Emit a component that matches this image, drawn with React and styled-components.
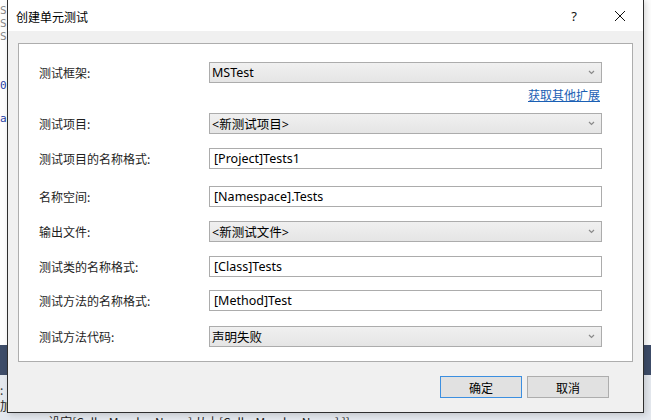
import React from "react";
import styled, { createGlobalStyle } from "styled-components";

const Global = createGlobalStyle`
  html, body { margin: 0; padding: 0; }
  body {
    width: 651px; height: 420px; overflow: hidden;
    font-family: "Noto Sans CJK SC", "Noto Sans", sans-serif;
    background: #f3f3f3;
  }
`;

const Desktop = styled.div`
  position: relative;
  width: 651px;
  height: 420px;
  overflow: hidden;
  display: flex;
  flex-direction: column;
`;

const EditorArea = styled.div`
  height: 345px;
  flex-shrink: 0;
  background: #fdfdfd;
  display: flex;
  flex-direction: column;
  padding-top: 4px;
  box-sizing: border-box;
  font-family: "DejaVu Sans Mono", monospace;
  font-size: 11px;
  line-height: 13px;
`;

const CodeLine = styled.div`
  color: ${(p) => p.$color || "#888"};
  margin-top: ${(p) => p.$mt || 0}px;
  white-space: pre;
`;

const Band = styled.div`
  height: 30px;
  flex-shrink: 0;
  background: #3d4c68;
`;

const LowerArea = styled.div`
  flex: 1;
  background: #e4e8ee;
  display: flex;
  flex-direction: column;
  font-family: "Noto Sans CJK SC", sans-serif;
  font-size: 12px;
  line-height: 14px;
  color: #222;
  padding-top: 8px;
`;

const Dialog = styled.div`
  position: absolute;
  left: 7px;
  top: -1px;
  width: 637px;
  height: 414px;
  box-sizing: border-box;
  border: 1px solid #2e2e2e;
  background: #f0f0f0;
  display: flex;
  flex-direction: column;
  box-shadow: 2px 2px 6px rgba(0,0,0,0.15);
`;

const TitleBar = styled.div`
  height: 31px;
  background: #ffffff;
  display: flex;
  align-items: center;
  padding: 0 0 0 8px;
  flex-shrink: 0;
`;

const Title = styled.div`
  flex: 1;
  font-size: 12px;
  color: #000;
  padding-top: 1px;
`;

const TitleButton = styled.div`
  width: ${(p) => p.$w}px;
  height: 31px;
  display: flex;
  align-items: center;
  justify-content: center;
  font-family: "Noto Sans", sans-serif;
  font-size: 13px;
  color: #111;
`;

const Body = styled.div`
  flex: 1;
  display: flex;
  flex-direction: column;
  padding: 12px 10px 0 10px;
`;

const Panel = styled.div`
  background: #fff;
  border: 1px solid #adadad;
  padding: 18px 30px 14px 20px;
  display: flex;
  flex-direction: column;
`;

const Row = styled.div`
  display: grid;
  grid-template-columns: 170px 393px;
  align-items: center;
  height: 21px;
  margin-top: ${(p) => p.$mt || 0}px;
`;

const Label = styled.div`
  font-size: 12px;
  color: #1e1e1e;
  line-height: 14px;
`;

const Combo = styled.div`
  height: 21px;
  box-sizing: border-box;
  border: 1px solid #acacac;
  background: linear-gradient(#f0f0f0, #e5e5e5);
  display: flex;
  align-items: center;
  padding: 0 6px 0 2px;
  font-family: "Noto Sans", "Noto Sans CJK SC", sans-serif;
  font-size: 12.5px;
  color: #000;
`;

const ComboText = styled.span`
  flex: 1;
`;

const TextBox = styled.div`
  height: 21px;
  box-sizing: border-box;
  border: 1px solid #acacac;
  background: #fff;
  display: flex;
  align-items: center;
  padding: 0 4px;
  font-family: "Noto Sans", "Noto Sans CJK SC", sans-serif;
  font-size: 12.5px;
  color: #000;
`;

const LinkRow = styled.div`
  height: 30px;
  display: flex;
  justify-content: flex-end;
  align-items: flex-start;
  padding-top: 5px;
  box-sizing: border-box;
  width: 561px;
`;

const Link = styled.a`
  font-size: 12px;
  line-height: 14px;
  color: #1a5fb4;
  text-decoration: underline;
  cursor: pointer;
`;

const ButtonBar = styled.div`
  display: flex;
  justify-content: flex-end;
  gap: 5px;
  padding: 14px 24px 0 0;
`;

const Button = styled.button`
  width: 82px;
  height: 22px;
  box-sizing: border-box;
  border: 1px solid ${(p) => (p.$default ? "#3c8fe0" : "#adadad")};
  background: #e1e1e1;
  font-family: "Noto Sans CJK SC", sans-serif;
  font-size: 12px;
  color: #000;
  padding: 0;
  display: flex;
  align-items: center;
  justify-content: center;
`;

const Chevron = () => (
  <svg width="7" height="5" viewBox="0 0 7 5">
    <polyline points="1,1 3.5,3.5 6,1" fill="none" stroke="#8a8a8a" strokeWidth="1.2" />
  </svg>
);

const CloseIcon = () => (
  <svg width="12" height="12" viewBox="0 0 12 12">
    <path d="M1 1 L11 11 M11 1 L1 11" stroke="#111" strokeWidth="1" />
  </svg>
);

const ComboField = ({ children }) => (
  <Combo>
    <ComboText>{children}</ComboText>
    <Chevron />
  </Combo>
);

const rows = [
  { label: "测试项目:", kind: "combo", value: "<新测试项目>", mt: 0 },
  { label: "测试项目的名称格式:", kind: "text", value: "[Project]Tests1", mt: 14 },
  { label: "名称空间:", kind: "text", value: "[Namespace].Tests", mt: 17 },
  { label: "输出文件:", kind: "combo", value: "<新测试文件>", mt: 14 },
  { label: "测试类的名称格式:", kind: "text", value: "[Class]Tests", mt: 14 },
  { label: "测试方法的名称格式:", kind: "text", value: "[Method]Test", mt: 13 },
  { label: "测试方法代码:", kind: "combo", value: "声明失败", mt: 15 },
];

export default function App() {
  return (
    <>
      <Global />
      <Desktop>
        <EditorArea>
          <CodeLine>S</CodeLine>
          <CodeLine>S</CodeLine>
          <CodeLine>S</CodeLine>
          <CodeLine $mt={36} $color="#1f3fa6">03</CodeLine>
          <CodeLine $mt={20} $color="#1f3fa6">ab</CodeLine>
        </EditorArea>
        <Band />
        <LowerArea>
          <CodeLine $color="#333">:</CodeLine>
          <CodeLine $mt={2} $color="#222">加</CodeLine>
          <CodeLine $mt={2} $color="#222">{"       · .  . 设定[CallerMemberName] 从上[CallerMemberName] ]]"}</CodeLine>
        </LowerArea>

        <Dialog>
          <TitleBar>
            <Title>创建单元测试</Title>
            <TitleButton $w={46}>?</TitleButton>
            <TitleButton $w={46}>
              <CloseIcon />
            </TitleButton>
          </TitleBar>
          <Body>
            <Panel>
              <Row>
                <Label>测试框架:</Label>
                <ComboField>MSTest</ComboField>
              </Row>
              <LinkRow>
                <Link>获取其他扩展</Link>
              </LinkRow>
              {rows.map((r) => (
                <Row key={r.label} $mt={r.mt}>
                  <Label>{r.label}</Label>
                  {r.kind === "combo" ? (
                    <ComboField>{r.value}</ComboField>
                  ) : (
                    <TextBox>{r.value}</TextBox>
                  )}
                </Row>
              ))}
            </Panel>
            <ButtonBar>
              <Button $default>确定</Button>
              <Button>取消</Button>
            </ButtonBar>
          </Body>
        </Dialog>
      </Desktop>
    </>
  );
}
